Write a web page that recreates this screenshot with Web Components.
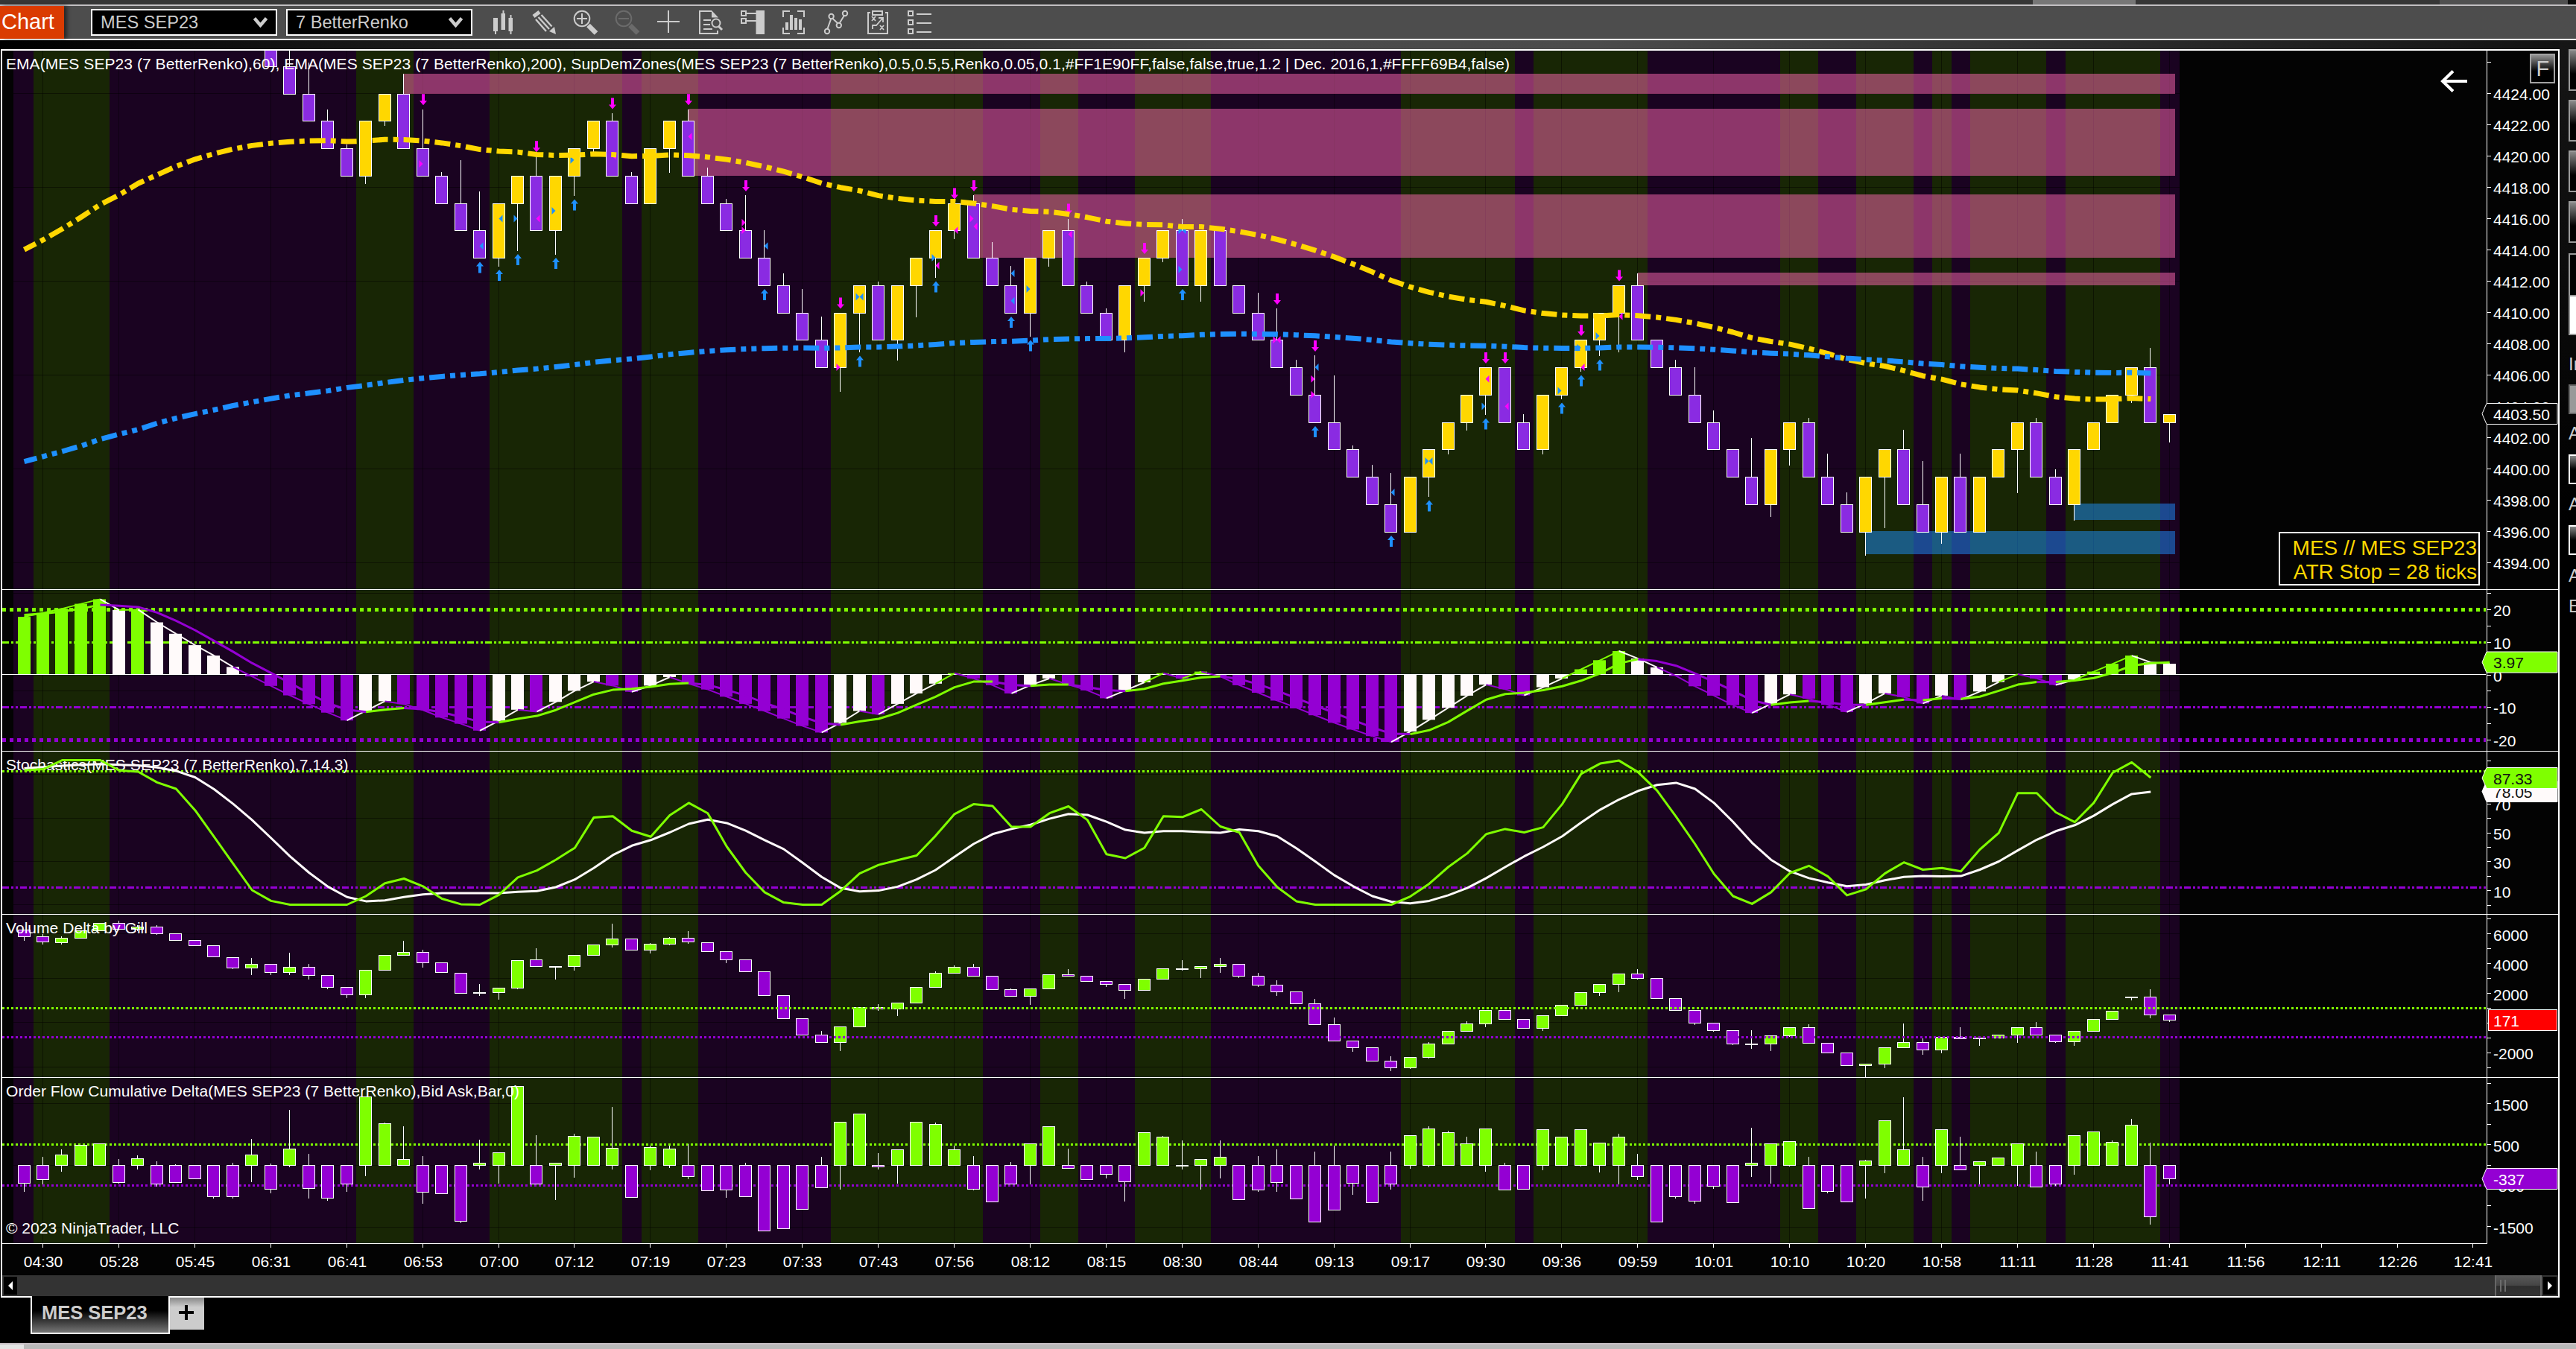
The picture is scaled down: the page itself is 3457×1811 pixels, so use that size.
<!DOCTYPE html>
<html lang="en">
<head>
<meta charset="utf-8">
<title>Chart</title>
<style>
	html, body {
		margin: 0;
		height: 100%;
		overflow: hidden;
		background: #000;
		font-family: "Liberation Sans", Arial, sans-serif;
	}
</style>
</head>
<body>
<chart-window>
	<chart-toolbar slot="toolbar">
		<tool-select>MES SEP23</tool-select>
		<tool-select>7 BetterRenko</tool-select>
	</chart-toolbar>
	<chart-frame>
		<price-panel></price-panel>
		<momentum-panel></momentum-panel>
		<stochastics-panel></stochastics-panel>
		<volume-panel></volume-panel>
		<flow-panel></flow-panel>
		<time-axis></time-axis>
		<scroll-strip></scroll-strip>
	</chart-frame>
	<trade-strip slot="side"></trade-strip>
	<tab-strip slot="tabs">MES SEP23</tab-strip>
</chart-window>

<script>
(function() {
	const LIME = "#7fff00", VIOLET = "#9400d3", SNOW = "#fffafa";
	const GOLD = "#ffd700", BLUE = "#1e90ff", PURPLE = "#8a2be2", PINK = "#ff69b4";

	function define(name, html, Base) {
		const template = document.createElement("template");
		template.innerHTML = html;
		customElements.define(name, class extends (Base || HTMLElement) {
			constructor() {
				super();
				this._root = this.attachShadow({mode: "open"});
				this._root.appendChild(template.content.cloneNode(true));
				if (this.render) this.render();
			}
		});
	}

	/* ---------- window shell ---------- */

	define("chart-window", `
		<style>
		:host { display: flex; flex-direction: column; width: 3457px; height: 1811px; background: #000; }
		.title { flex: none; height: 6px; display: flex; background: #363636; }
		.title i { display: block; height: 6px; }
		.work {
			flex: 1; min-height: 0; display: flex; align-items: flex-start;
			background:
				linear-gradient(90deg, #000 0, #1f1f1f 19%, #333 37%, #494949 50%, #4b4b4b 62%, #262626 86%, #111 100%) 0 0 / 100% 12px no-repeat;
		}
		.main { flex: none; width: 3434px; padding: 12px 0 0 1px; }
		.foot { flex: none; height: 6px; border-top: 2px solid #c6bfc3; background: linear-gradient(90deg, #e4e4e4 32px, #b9b9b9 32px); }
		</style>
		<div class="title">
			<i style="width:2728px"></i><i style="width:138px;background:#777"></i><i style="width:408px"></i>
			<i style="width:172px;background:#505050"></i><i style="width:11px;background:#0a0a0a"></i>
		</div>
		<slot name="toolbar"></slot>
		<div class="work">
			<div class="main"><slot></slot><slot name="tabs"></slot></div>
			<slot name="side"></slot>
		</div>
		<div class="foot"></div>
	`);

	define("tool-select", `
		<style>
		:host {
			display: flex; align-items: center; justify-content: space-between; box-sizing: border-box;
			width: 250px; height: 36px; padding: 0 11px 0 11px; border: 2px solid #fff; background: #000;
			color: #ccc; font-size: 23.6px; line-height: 32px;
		}
		svg { display: block; width: 19px; height: 14px; }
		</style>
		<span><slot></slot></span>
		<svg viewBox="0 0 19 14"><path d="M1.5 1.5L9.5 11L17.5 1.5" fill="none" stroke="#ccc" stroke-width="4.4"/></svg>
	`);

	define("chart-toolbar", `
		<style>
		:host {
			flex: none; display: flex; align-items: center; height: 44px;
			background: #4d4d4d; border-top: 2px solid #c2bfc2; border-bottom: 2px solid #fff;
		}
		.tab {
			width: 84px; height: 44px; padding-left: 2px; margin-right: 36px; background: #da3b01; color: #fff;
			font-size: 29px; line-height: 43px; box-shadow: 4px 0 5px rgba(0,0,0,.5);
		}
		.picks { display: flex; gap: 12px; }
		.icons { display: block; width: 600px; height: 44px; margin-left: 22px; }
		</style>
		<div class="tab">Chart</div>
		<div class="picks"><slot></slot></div>
		<svg class="icons" viewBox="656 8 600 44" fill="none" stroke="#ccc" stroke-width="2">
			<g fill="#ccc" stroke="none">
				<path d="M662 24h6v18h-6zM664 42h2v4h-2zM672.500 18h5.500v22h-5.500zM674.500 14h2v4h-2zM682.500 24h5.500v18h-5.500zM684.500 20h2v26h-2z"/>
				<path d="M714.500 20l8-6 3 4-8 6zM746 46l-9-4 7-6z"/>
			</g>
			<path d="M719 26l14 16M722.500 23l14.500 16M726.500 20l14 15.500" stroke-width="2.400"/>
			<circle cx="781" cy="25" r="10.300"/><path d="M774 25h14M781 18v14"/><path d="M789.500 34l10.500 10.500" stroke-width="6.500"/>
			<g stroke="#6b6b6b"><circle cx="837" cy="25" r="10.300"/><path d="M830 25h14"/><path d="M845.500 34l10.500 10.500" stroke-width="6.500"/></g>
			<path d="M882 29h30M897 14v30"/>
			<path d="M955 15H939V45H963V41"/><path d="M955 14l9 9.500h-9z" fill="#ccc" stroke="none"/>
			<path d="M944 27h10M944 33h9M944 39h12"/><circle cx="961" cy="31" r="5.500"/><path d="M964 35l5 5" stroke-width="3"/>
			<path d="M995 15h6v6h-6zM995 25h6v6h-6zM1002 18h13M1002 28h13"/><path d="M1014.500 14h11.500v32h-11.500z" fill="#ccc" stroke="none"/>
			<path d="M1060 15h-9v8M1070 15h9v8M1060 45h-9v-8M1070 45h9v-8"/>
			<path d="M1054 30h4v10h-4zM1060 20h4v20h-4zM1066 24h4v16h-4zM1072 26h4v14h-4z" fill="#ccc" stroke="none"/>
			<path d="M1110.500 38.500L1115 26M1117.500 25l6.500 6M1127 30.500l5.500-9"/>
			<circle cx="1110" cy="42" r="3.200"/><circle cx="1115.600" cy="22" r="3.200"/><circle cx="1125.800" cy="34" r="3.200"/><circle cx="1134" cy="18" r="3.200"/>
			<path d="M1168 17h-3v28h26V17h-3M1171 15h13v5h-13z"/>
			<path d="M1170 22l5 6M1175 22l-5 6M1181 34l5 6M1186 34l-5 6M1171 39v-5h5l8-9M1179 24h6v6" stroke-width="1.800"/>
			<path d="M1219 15h6v6h-6zM1219 27h6v6h-6zM1219 39h6v6h-6zM1230 19h20M1230 31h20M1230 43h20"/>
		</svg>
	`);

	define("chart-frame", `
		<style>
		:host {
			display: flex; flex-direction: column; box-sizing: border-box; width: 3434px; height: 1676px;
			border: 2px solid #fff; background: #030303;
		}
		</style>
		<slot></slot>
	`);

	define("scroll-strip", `
		<style>
		:host { display: flex; align-items: center; height: 28px; background: #333; }
		.btn { width: 18px; height: 24px; margin: 0 2px; background: #000; display: grid; place-items: center; }
		.thumb {
			box-sizing: border-box; width: 63px; height: 28px; margin-left: auto; padding: 6px 5px;
			display: flex; gap: 4px; border: solid #666; border-width: 0 2px;
			background: linear-gradient(#5a5a5a, #444 50%, #2e2e2e 52%, #333);
		}
		.thumb i { width: 2px; height: 16px; background: #6c6c6c; }
		svg { display: block; width: 6px; height: 12px; fill: #fff; }
		</style>
		<div class="btn"><svg viewBox="0 0 6 12"><path d="M6 0v12L0 6z"/></svg></div>
		<div class="thumb"><i></i><i></i></div>
		<div class="btn"><svg viewBox="0 0 6 12"><path d="M0 0v12l6-6z"/></svg></div>
	`);

	define("tab-strip", `
		<style>
		:host { display: flex; align-items: flex-start; padding-left: 40px; }
		.tab {
			box-sizing: border-box; width: 187px; height: 51px; margin-top: -2px; padding-left: 13px;
			border: 2px solid #fff; border-top: 0; background: linear-gradient(#000 40%, #777);
			color: #ccc; font: bold 25.500px/45px "Liberation Sans", Arial, sans-serif;
		}
		.add { width: 46px; height: 43px; background: linear-gradient(#888, #ccc 30%); }
		svg { display: block; width: 46px; height: 43px; }
		</style>
		<div class="tab"><slot></slot></div>
		<div class="add"><svg viewBox="0 0 46 43"><path d="M12 20h20M22 10v20" stroke="#000" stroke-width="4"/></svg></div>
	`);

	define("trade-strip", `
		<style>
		:host {
			display: flex; flex-direction: column; box-sizing: border-box; width: 22px; height: 1749px; padding: 12px 0 0 12px;
			overflow: hidden; background: linear-gradient(#161616, #000 650px); color: #ccc; font-size: 24px; line-height: 28px;
		}
		div { flex: none; box-sizing: border-box; width: 40px; border: 2px solid #999; background: #000; }
		.up { height: 56px; margin-bottom: 12px; background: linear-gradient(#888, #000 60%); }
		.mini { height: 40px; border-color: #fff; background: linear-gradient(#888, #000 50%); }
		span { flex: none; height: 28px; white-space: nowrap; }
		</style>
		<div class="up"></div><div class="up"></div><div class="up"></div><div class="up"></div>
		<div style="height:56px;margin-top:2px;border-bottom:0"></div>
		<div style="height:54px;background:#fff"></div>
		<span style="margin-top:25px">In</span>
		<div style="height:40px;margin-top:13px;border-color:#666;background:#999"></div>
		<span style="margin-top:12px">A</span>
		<div class="mini" style="margin-top:14px"></div>
		<span style="margin-top:13px">A</span>
		<div class="mini" style="margin-top:14px"></div>
		<span style="margin-top:14px">A</span>
		<span style="margin-top:13px">E</span>
	`);

	/* ---------- plot helpers ---------- */

	const X = i => 32.5 + 25.48 * i;
	const PLOT_LEFT = 3, AXIS = 3337;
	const BULL = [[1, 4], [18, 20], [25, 31], [33, 35], [43, 50], [54, 55], [59, 62], [73, 78], [80, 85],
		[93, 94], [97, 99], [101, 101], [103, 106], [108, 112]];

	const box = (x, y, w, h, fill, more = "") => `<rect x="${x}" y="${y}" width="${w}" height="${h}" fill="${fill}" ${more}/>`;
	const rule = (y, color, w, dash) =>
		`<path d="M${PLOT_LEFT} ${y}H${AXIS - 1}" stroke="${color}" stroke-width="${w}" ${dash ? `stroke-dasharray="${dash}"` : ""}/>`;
	const text = (x, y, s, size = 21, fill = "#fff", more = "") =>
		`<text x="${x}" y="${y}" font-size="${size}" fill="${fill}" ${more}>${s}</text>`;
	const title = (y, s, width) => text(8, y, s, 21, "#fff", `textLength="${width}"`);
	const line = (pts, color, w, more = "") =>
		`<polyline points="${pts.map(p => p[0].toFixed(1) + "," + p[1].toFixed(1)).join(" ")}" fill="none" stroke="${color}" stroke-width="${w}" stroke-linejoin="round" ${more}/>`;

	// body with a one pixel outline and the wick behind it
	function candle(i, top, bottom, high, low, color) {
		const c = Math.round(X(i));
		const t = Math.round(top), h = Math.max(1, Math.round(bottom) - t);
		const hi = Math.round(high), lo = Math.round(low);
		return box(c - 1, hi, 1, Math.max(0, lo - hi + 1), "#fff") +
			box(c - 8.5, t + .5, 16, h, color, 'stroke="#fff"');
	}

	function tag(y, label, fill, color, edge = "#fff") {
		return `<path d="M3331 ${y}L3337 ${y - 14}H3432V${y + 14}H3337Z" fill="${fill}" stroke="${edge}"/>` + text(3346, y + 8, label, 21, color);
	}

	class Panel extends HTMLElement {
		render() {
			const top = this.top, h = this.bottom - top;
			let s = box(PLOT_LEFT, top, 3430, h, "#030303");
			s += box(18, top, 2907, h, "#1a0321");
			for (const [a, b] of BULL) {
				const x = Math.round(X(a - .5));
				s += box(x, top, Math.round(X(b + .5)) - x, h, "#182605");
			}
			for (let i = 1; i < 114; i += 4) s += box(Math.round(X(i)) - 1, top, 1, h, "rgba(0,0,0,.45)");
			for (const y of this.grid) s += box(18, Math.round(y - .5), 2907, 1, "rgba(0,0,0,.45)");
			s += this.plot();
			s += box(AXIS, top, 1, h, "#fff");
			for (const y of this.ticks) s += box(AXIS + 1, Math.round(y - .5), 5, 1, "#fff");
			for (const [y, label] of this.labels) s += text(3346, y + 8.5, label);
			s += this.tags();
			s += box(PLOT_LEFT, this.bottom - 1, this.bottom > 1600 ? 3335 : 3430, 1, "#fff");
			const css = `:host { display: block; flex: none; height: ${h}px; } svg { display: block; }`;
			this._root.innerHTML = `<style>${css}</style>
				<svg width="3430" height="${h}" viewBox="${PLOT_LEFT} ${top} 3430 ${h}" font-family="Liberation Sans, Arial, sans-serif">${s}</svg>`;
		}
	}

	/* ---------- price ---------- */

	// bar 13 onwards; levels are ticks below 4424: side, top, bottom, wick end, signal arrows
	const BRICKS = `P -14 -7,P -7 0 -12,P 0 7 -8,P 7 14 4,P 14 21 13,Y 7 21 23,Y 0 7 8,P 0 14 -5,P 14 21 4 d,P 21 28 20,P 28 35 17,
P 35 42 25 u,Y 28 42 44 u,Y 21 28 40 u,P 21 35 16 d,Y 21 35 41 u,Y 14 21 26 u,Y 7 14 15,P 7 21 5 d,P 21 28 20,Y 14 28,Y 7 14 20,
P 7 21 4 d,P 21 28 19,P 28 35 27,P 35 42 26 d,P 42 49 35 u,P 49 56 46,P 56 63 50,P 63 70 57,Y 56 70 76 d,Y 49 56 66 u,P 49 63 48,
Y 49 63 68,Y 42 49 57,Y 35 42 47 du,Y 28 35 37 d,P 28 42 26 d,P 42 49 38,P 49 56 44 u,Y 42 56 62 u,Y 35 42 44,P 35 49 32 d,
P 49 56 48,P 56 63 55,Y 49 63 66,Y 42 49 53 d,Y 35 42 43,P 35 49 32 u,Y 35 49 53,P 35 49,P 49 56,P 56 63 51,P 63 70 55 d,
P 70 77 68,P 77 84 67 du,P 84 91 72,P 91 98 90,P 98 105 95,P 105 112 97 u,Y 98 112,Y 91 98 103 u,Y 84 91 92,Y 77 84 86,
Y 70 77 82 du,P 70 84 70 d,P 84 91 82,Y 77 91 92,Y 70 77 78 u,Y 63 70 71 du,Y 56 63 67 u,Y 49 56 66 d,P 49 63 46,P 63 70,
P 70 77 68,P 77 84 70,P 84 91 81,P 91 98,P 98 105 88,Y 91 105 108,Y 84 91 95,P 84 98 83,P 98 105 92,P 105 112 102,Y 98 112 118,
Y 91 98 111,P 91 105 86,P 105 112 94,Y 98 112 115,P 98 112 92,Y 98 112,Y 91 98,Y 84 91 102,P 84 98 83,P 98 105 96,Y 91 105 109,
Y 84 91,Y 77 84,Y 70 77 79,P 70 84 65,Y 82 84 89`.split(",").map((row, k) => {
		const [side, top, bottom, wick, arrows] = row.trim().split(" ");
		const b = {i: 13 + k, side, top: +top, bottom: +bottom, arrows: arrows || ""};
		b.high = side === "P" && wick ? +wick : b.top;
		b.low = side === "Y" && wick ? +wick : b.bottom;
		b.close = side === "P" ? b.bottom : b.top;
		return b;
	});

	// fills: bar, tick, pointing direction, m = sell, b = buy
	const FILLS = `21 18 r m,24 39 l b,25 32 l b,26 32 r b,27 32 l m,28 30 r b,29 17 r b,31 16 l m,35 11 l m,38 33 r m,38 35 r m,
39 39 l b,43 70 r m,44 52 r b,44 52 l b,48 42 r b,48 44 l m,49 35 l m,50 32 r m,50 34 l m,52 46 l b,52 53 l b,53 50 r b,55 36 l m,
59 51 r m,61 45 r b,61 35 r b,61 35 l b,66 63 r m,66 63 l m,68 70 l b,68 73 r m,68 77 r m,72 102 l b,74 94 r b,74 94 l b,
77 73 l m,77 80 r b,78 80 l m,81 76 r b,82 65 r b,82 70 l m,83 62 r b,84 57 l m`.split(",").map(s => s.trim().split(" "));

	const tickY = t => 125.6 + 5.25 * t;

	function ema(seed, period) {
		const out = seed.slice();
		for (let i = seed.length; i <= 112; i++) {
			const prev = out[i - 1];
			out.push(prev + (BRICKS[i - 13].close - prev) * 2 / (period + 1));
		}
		return out.map((v, i) => [X(i), tickY(v)]);
	}

	define("price-panel", "", class extends Panel {
		get top() { return 68; }
		get bottom() { return 792; }
		get grid() { return [0, 1, 2, 3, 4, 5].map(k => 125.6 + 126 * k); }
		get ticks() { return Array.from({length: 17}, (_, k) => 83.6 + 42 * k); }
		get labels() { return Array.from({length: 16}, (_, k) => [125.6 + 42 * k, (4424 - 2 * k) + ".00"]); }
		plot() {
			const zone = (bar, y1, y2, color) => box(Math.round(X(bar)), y1, 2919 - Math.round(X(bar)), y2 - y1, color, 'opacity=".5"');
			let s = zone(20, 99, 126, PINK) + zone(35, 146, 236, PINK) + zone(50, 261, 346, PINK) + zone(85, 366, 383, PINK) +
				zone(108, 676, 698, BLUE) + zone(97, 713, 744, BLUE);
			for (const b of BRICKS) {
				s += candle(b.i, tickY(b.top), tickY(b.bottom), tickY(b.high), tickY(b.low), b.side === "P" ? PURPLE : GOLD);
				const c = Math.round(X(b.i));
				if (b.arrows.includes("u")) {
					s += `<path d="M${c} ${tickY(b.low + 1).toFixed(1)}l5 6h-3v9h-4v-9h-3z" fill="${BLUE}"/>`;
				}
				if (b.arrows.includes("d")) {
					s += `<path d="M${c} ${tickY(b.high - 1).toFixed(1)}l5-6h-3v-9h-4v9h-3z" fill="#f0f"/>`;
				}
			}
			for (const [i, t, dir, kind] of FILLS) {
				const c = Math.round(X(+i)) - .5;
				s += `<path d="M${c} ${tickY(+t)}l${dir === "r" ? "-5-5v10z" : "5-5v10z"}" fill="${kind === "m" ? "#f0f" : BLUE}"/>`;
			}
			s += line(ema([39.9, 37.4, 34.6, 31.6, 28.4, 25.9, 23, 20.8, 18.6, 16.8, 15.4, 14.2, 13.3, 12.7, 12.3, 12.1, 12], 60),
				GOLD, 7, 'stroke-dasharray="21 7 7 7" stroke-dashoffset="3.5"');
			s += line(ema([94.1, 92.8, 91.5, 90.1, 88.4, 87.1, 85.9, 84.3, 83, 81.9, 80.9, 79.8, 78.9, 78, 77.2, 76.6, 76, 75.2, 74.6, 73.9, 73.3], 200),
				BLUE, 7, 'stroke-dasharray="21 7 7 7 7 7" stroke-dashoffset="3.5"');
			s += title(93, "EMA(MES SEP23 (7 BetterRenko),60), EMA(MES SEP23 (7 BetterRenko),200), SupDemZones(MES SEP23 (7 BetterRenko),0.5,0.5,5,Renko,0.05,0.1,#FF1E90FF,false,false,true,1.2 | Dec. 2016,1,#FFFF69B4,false)", 2018);
			s += '<path d="M3311 109H3279M3292 95.500L3278 109l14 13.500" fill="none" stroke="#fff" stroke-width="4"/>';
			s += box(3059, 715, 268, 70, "#030303", 'stroke="#fff" stroke-width="2"');
			s += text(3324, 744.5, "MES // MES SEP23", 28, GOLD, 'text-anchor="end"') + text(3324, 776.5, "ATR Stop = 28 ticks", 28, GOLD, 'text-anchor="end"');
			return s;
		}
		tags() {
			return tag(555.5, "4403.50", "#030303", "#fff") +
				'<linearGradient id="f" x2="0" y2="1"><stop stop-color="#999"/><stop offset=".6" stop-color="#000"/></linearGradient>' +
				box(3396, 73, 32, 38, "url(#f)", 'stroke="#a3a3a3" stroke-width="2"') + text(3403.5, 102, "F", 29, "#ccc");
		}
	});

	/* ---------- momentum histogram ---------- */

	const MOMENTUM = `G17.7 G18.9 G20.2 G21.7 G23.1 W19.8 G19.9 W16 W12.5 W9 W5.8 W2.3 P-.6 P-3.5 P-6.4 P-9.1 P-11.7 P-14.1 W-11.1 W-8.2
P-9.1 P-10.9 P-13.2 P-15.1 P-17.2 W-14.2 W-10.8 P-11.4 W-8.4 W-5 W-2.2 P-3.4 P-5.3 W-3.4 W-.8 P-2.8 P-4.6 P-6.8 P-9 P-11.2 P-13.5
P-15.8 P-17.8 W-14.8 W-11.2 P-12.2 W-9 W-5.8 W-2.8 G.4 P-1.2 P-3.3 P-5.8 W-3.3 W-1.2 P-3.1 P-4.9 P-7.3 W-4.9 W-2.4 G.4 P-1.2 G.9
P-.6 P-3.3 P-5.6 P-8 P-10.2 P-12.5 P-14.8 P-16.9 P-18.9 P-20.7 W-17.5 W-13.9 W-10.2 W-6.5 W-3.1 P-4.5 P-6.4 W-3.9 W-1.2 G1.6 G4.4
G7.2 W4.9 W2.2 P-.4 P-3.6 P-6.5 P-9.4 P-11.8 W-9 W-6.1 P-7.4 P-9.3 P-11.5 W-8.9 W-5.8 P-6.9 P-8.9 W-6.5 P-7.7 W-5.2 W-2.3 G.1
P-1.2 P-3.2 W-1.6 G.9 G3.3 G5.8 W3.7 W3.3`.split(/\s+/).map(s => [s[0], +s.slice(1)]);
	const SIGNAL = [18.3, 18.7, 19.3, 20.2, 21.4, 21.1, 20.7, 19, 16.5, 13.6, 10.3, 7, 3.5, .5, -2.6, -5.8, -8.8, -10.8, -11.5, -10.8,
		-10.3, -10.6, -11.6, -13, -14.5, -14.7, -13.6, -12.7, -10.9, -8.5, -6.1, -4.7, -4.4, -3.8, -2.9, -2.6, -3.2, -4.7, -6.5, -8.7,
		-10.7, -13, -14.9, -15.4, -14.4, -13.6, -11.8, -9.3, -6.8, -3.9, -2.2, -2.2, -3.2, -3.5, -3.1, -3.1, -3.9, -4.8, -5.1, -4.4,
		-2.8, -1.9, -.9, -.6, -1.4, -3, -5, -7.3, -9.5, -11.8, -14, -16.2, -18.2, -18.3, -17.1, -14.6, -11.1, -7.7, -6, -5.6, -4.8,
		-3.6, -1.9, .3, 3.4, 4.7, 4.1, 2.7, .3, -2.2, -5, -7.9, -9.3, -8.6, -8.1, -8.6, -9.3, -9.3, -8.5, -7.7, -7.9, -7.3, -7.5,
		-6.8, -5, -3.1, -2.3, -2.3, -1.8, -1.1, .5, 2.7, 3.5, 3.7];
	const FALLING = [[4, 18], [20, 25], [35, 43], [51, 53], [55, 58], [63, 73], [85, 92], [94, 97], [99, 100], [101, 102], [106, 107]];
	const INK = {G: LIME, W: SNOW, P: VIOLET};

	define("momentum-panel", "", class extends Panel {
		get top() { return 792; }
		get bottom() { return 1009; }
		get grid() { return [796, 927]; }
		get ticks() { return Array.from({length: 10}, (_, k) => 796.5 + 21.9 * k); }
		get labels() { return [[818.5, "20"], [862.4, "10"], [906, "0"], [949.8, "-10"], [993.6, "-20"]]; }
		plot() {
			const y = v => 905.5 - 4.375 * v;
			let s = rule(818.5, LIME, 5, "5 5") + rule(862.5, LIME, 3, "9 3 3 3 3 3") + rule(949.5, VIOLET, 3, "9 3 3 3 3 3") + rule(993.5, VIOLET, 5, "5 5");
			MOMENTUM.forEach(([k, v], i) => {
				s += box(Math.round(X(i)) - 9, Math.min(905.5, y(v)).toFixed(1), 17, Math.abs(4.375 * v).toFixed(1), INK[k]);
			});
			s += rule(905.5, "#fff", 1);
			MOMENTUM.forEach(([k, v], i) => {
				if (i) s += line([[X(i - 1), y(MOMENTUM[i - 1][1])], [X(i), y(v)]], INK[k], 2);
			});
			const pts = SIGNAL.map((v, i) => [X(i), y(v)]);
			s += line(pts.slice(0, 5), LIME, 3);
			FALLING.forEach(([a, b], n) => {
				s += line(pts.slice(a, b + 1), VIOLET, 3);
				const next = FALLING[n + 1] ? FALLING[n + 1][0] : 113;
				s += line(pts.slice(b, next + 1), LIME, 3);
			});
			return s;
		}
		tags() { return tag(889, "3.97", LIME, "#111"); }
	});

	/* ---------- stochastics ---------- */

	// the three lower studies keep their levels on one shared row grid
	const row = r => 780 + r * .574;

	const FAST = [443, 440, 419, 419, 419, 443, 446, 471, 486, 536, 598, 661, 723, 748, 757, 757, 757, 757, 737, 707, 696, 714, 743,
		756, 757, 734, 693, 677, 652, 624, 553, 550, 584, 598, 548, 519, 543, 621, 682, 728, 752, 757, 757, 725, 684, 664, 653, 642,
		596, 545, 522, 526, 575, 575, 543, 527, 559, 639, 648, 624, 550, 552, 534, 574, 588, 666, 716, 749, 757, 757, 757, 757, 757,
		738, 708, 669, 637, 592, 580, 588, 576, 522, 451, 427, 420, 447, 490, 551, 615, 685, 737, 755, 728, 683, 666, 691, 735, 721,
		684, 658, 675, 671, 679, 628, 589, 496, 496, 541, 564, 519, 448, 424, 460];
	const SLOW = [438, 435, 432, 430, 428, 430, 431, 436, 444, 459, 487, 521, 559, 601, 644, 682, 715, 739, 749, 747, 739, 733, 730,
		730, 730, 730, 727, 725, 716, 698, 671, 641, 619, 606, 588, 568, 558, 566, 584, 606, 627, 659, 692, 718, 726, 724, 715, 698,
		676, 645, 615, 592, 580, 570, 556, 545, 547, 563, 582, 589, 585, 585, 587, 589, 581, 585, 597, 625, 656, 688, 714, 737, 750,
		754, 748, 735, 718, 695, 669, 644, 622, 597, 565, 535, 511, 491, 477, 472, 486, 519, 563, 612, 652, 679, 695, 705, 714, 710,
		700, 692, 690, 691, 690, 675, 656, 630, 605, 585, 571, 549, 522, 498, 493];

	define("stochastics-panel", "", class extends Panel {
		get top() { return 1009; }
		get bottom() { return 1228; }
		get grid() { return [1039, 1098.5, 1156.5, 1214.5]; }
		get ticks() { return Array.from({length: 11}, (_, k) => 1021 + 19.4 * k); }
		get labels() { return [[1079, "70"], [1118, "50"], [1157, "30"], [1196, "10"]]; }
		plot() {
			return rule(1035.5, LIME, 3, "3 3") + rule(1191.5, VIOLET, 3, "9 3 3 3 3 3") +
				title(1034, "Stochastics(MES SEP23 (7 BetterRenko),7,14,3)", 459.5) +
				line(SLOW.map((r, i) => [X(i), row(r)]), SNOW, 3) +
				line(FAST.map((r, i) => [X(i), row(r)]), LIME, 3);
		}
		tags() { return tag(1062.5, "78.05", SNOW, "#111") + tag(1044.5, "87.33", LIME, "#111"); }
	});

	/* ---------- volume delta ---------- */

	// side, open/close rows, then high and low rows where the wick shows
	const DELTA = `P 816 832 816 840,P 832 844 826 850,G 835 845 832 850,G 818 835,G 800 818,P 800 814 796 816,G 810 814 806 818,
P 810 825 806 827,P 825 841,P 841 852,P 853 879,P 880 905 880 907,G 897 905 883 920,P 897 916 897 920,G 904 916 871 920,
P 904 922 896 932,P 923 950 923 953,P 950 968 950 974,G 911 968 911 975,G 875 910,G 868 875 843 875,P 868 892 863 903,P 893 916,
P 917 965,G 963 965 944 969,G 952 962 952 979,G 887 952 887 954,P 886 902 860 902,G 901 902 901 932,G 875 902 875 911,G 851 875,
G 837 851 802 856,P 837 863,G 850 863 847 870,G 835 849 833 851,P 835 844 819 847,P 845 866,P 867 886 867 893,P 886 914,
P 914 969,P 969 1023,P 1023 1062,P 1062 1079 1054 1079,G 1043 1079 1043 1099,G 998 1043,P 998 1001 990 1004,G 987 1001 987 1016,
G 951 987,G 917 950 914 950,G 903 917 899 917,P 903 924 896 924,P 924 955,P 956 971 953 971,G 954 971 954 990,G 921 954,
P 920 924 908 924,P 924 936,P 937 943 937 948,P 943 957 943 976,G 931 957,G 907 931,P 906 907 887 911,G 901 907 901 927,
G 897 901 882 915,P 896 924 896 927,P 924 945 918 948,P 945 961 934 969,P 961 989,P 989 1037 979 1037,P 1037 1076 1021 1076,
P 1076 1091 1076 1101,P 1091 1123,P 1123 1138 1113 1145,G 1114 1138 1114 1141,G 1083 1114 1079 1116,G 1053 1083,
G 1036 1053 1030 1053,G 1004 1036 1004 1042,P 1004 1025,P 1025 1046,G 1017 1046 1017 1051,G 992 1017,G 963 992,G 944 962 944 969,
G 919 943 919 960,P 919 930 909 932,P 930 976,P 977 1004,P 1004 1034 1004 1037,P 1034 1051 1034 1054,P 1051 1083 1051 1085,
P 1082 1083 1052 1094,G 1063 1083 1063 1098,G 1045 1063 1045 1066,P 1045 1081 1038 1081,P 1081 1104,P 1104 1133,
G 1130 1133 1130 1160,G 1091 1130 1091 1138,G 1079 1091 1035 1091,P 1079 1097 1071 1108,G 1067 1097 1067 1104,
P 1067 1070 1044 1070,G 1069 1070 1069 1087,G 1062 1069,G 1045 1062 1045 1080,P 1045 1062 1033 1062,P 1062 1077 1062 1080,
G 1053 1077 1053 1087,G 1025 1053,G 1006 1025,G 973 975 973 980,P 973 1015 955 1022,P 1015 1027 1015 1031`;

	define("volume-panel", "", class extends Panel {
		get top() { return 1228; }
		get bottom() { return 1447; }
		get grid() { return [1253.5, 1313.5, 1372.5, 1432.5]; }
		get ticks() { return Array.from({length: 11}, (_, k) => 1233.5 + 19.95 * k); }
		get labels() { return [[1254, "6000"], [1294, "4000"], [1334, "2000"], [1413, "-2000"]]; }
		plot() {
			let s = "";
			DELTA.split(",").forEach((d, i) => {
				const [side, a, b, hi, lo] = d.trim().split(" ");
				s += candle(i, row(+a) - .5, row(+b) - .5, row(+(hi || a)) - .5, row(+(lo || b)) - .5, INK[side]);
			});
			return s + rule(1353.5, LIME, 3, "3 3") + rule(1392.5, VIOLET, 3, "3 3") + title(1253, "Volume Delta by Gill", 190);
		}
		tags() { return box(3339.5, 1355.5, 92, 28, "#f00", 'stroke="#fff"') + text(3346, 1378, "171"); }
	});

	/* ---------- order flow ---------- */

	// side and close row measured from the zero row, then high and low; 0 = no wick on that side
	const FLOW = `P 1408 0 1428,P 1400 1347 1411,G 1342 1331 1381,G 1320,G 1316,P 1407 1352 1409,G 1351 1344 1376,P 1411 1358 1415,
P 1407 1365,P 1398,P 1440 0 1444,P 1440 1362 1444,G 1342 1305 1405,P 1423 1364 1431,G 1329 1238 1371,P 1420 1341 1444,
P 1443 0 1448,P 1411 0 1427,G 1207 0 1391,G 1269 1267,G 1352 1277,P 1430 1345 1456,P 1433,P 1497 0 1500,G 1362 1307 1375,
G 1337 0 1408,G 1182,P 1410 1297,G 1362 0 1446,G 1298 1294 1394,G 1301,G 1326 1230 1376,P 1441,G 1325 1321 1378,G 1329 1322 1372,
P 1393 1318 1398,P 1426,P 1424 0 1441,P 1440 1361,P 1520,P 1515,P 1469,P 1419 1348,G 1266 0 1422,G 1246,P 1370 1338 1376,
G 1330 0 1408,G 1266,G 1271 1267,G 1330 1322,P 1422 1345 1425,P 1452,P 1410 1359,G 1316 0 1411,G 1276,P 1374 1329,P 1400,
P 1388 0 1396,P 1405 0 1451,G 1290,G 1301 1298,P 1368 1310 1376,G 1353 0 1422,G 1347 1310 1397,P 1447,P 1424 1345 1427,
P 1407 1331 1427,P 1445,P 1499 1336,P 1471 1321,P 1408 0 1434,P 1454,P 1410 1336 1423,G 1297 0 1373,G 1281 1277 1371,
G 1290 1287,G 1316 1300,G 1281 0 1380,P 1424 1361,P 1422,G 1283 0 1378,G 1300,G 1283 0 1369,G 1315 0 1383,G 1300 1294 1411,
P 1393 1340 1400,P 1499,P 1440 0 1443,P 1450 0 1455,P 1415 0 1421,P 1454,G 1362 1279 1392,G 1316 0 1409,G 1311 0 1369,
P 1468 1348,P 1428 0 1432,P 1452,G 1356 1354 1443,G 1262 0 1385,G 1330 1209,P 1417 1347 1448,G 1283 0 1385,P 1377 1300,
G 1358 0 1411,G 1349,G 1316 0 1414,P 1417 1335,P 1410 0 1413,G 1297 0 1387,G 1289,G 1313 1309,G 1273 1258,P 1487 1315 1505,
P 1398 0 1411`;

	define("flow-panel", "", class extends Panel {
		get top() { return 1447; }
		get bottom() { return 1670; }
		get grid() { return [1481.5, 1564.5, 1647]; }
		get ticks() { return Array.from({length: 8}, (_, k) => 1454.5 + 27.4 * k); }
		get labels() { return [[1482, "1500"], [1537, "500"], [1591.5, "-500"], [1647, "-1500"]]; }
		plot() {
			let s = rule(1536.5, LIME, 3, "3 3") + rule(1591.5, VIOLET, 3, "3 3");
			FLOW.split(",").forEach((d, i) => {
				const [side, close, hi, lo] = d.trim().split(" ").map((v, k) => k ? +v : v);
				const a = Math.min(close, 1367), b = Math.max(close, 1367);
				s += candle(i, row(a) - .5, row(b) - .5, row(hi || a) - .5, row(lo || b) - .5, INK[side]);
			});
			return s + title(1472, "Order Flow Cumulative Delta(MES SEP23 (7 BetterRenko),Bid Ask,Bar,0)", 689) +
				title(1656, "© 2023 NinjaTrader, LLC", 232.5);
		}
		tags() { return tag(1582.5, "-337", VIOLET, "#fff"); }
	});

	/* ---------- time axis ---------- */

	const TIMES = `04:30 05:28 05:45 06:31 06:41 06:53 07:00 07:12 07:19 07:23 07:33 07:43 07:56 08:12 08:15 08:30 08:44 09:13 09:17
09:30 09:36 09:59 10:01 10:10 10:20 10:58 11:11 11:28 11:41 11:56 12:11 12:26 12:41`.split(/\s+/);

	define("time-axis", `
		<style>:host { display: block; flex: none; height: 42px; } svg { display: block; }</style>
		<svg width="3430" height="42" viewBox="3 1670 3430 42" font-family="Liberation Sans, Arial, sans-serif" text-anchor="middle"></svg>
	`, class extends HTMLElement {
		render() {
			this._root.querySelector("svg").innerHTML = TIMES.map((t, k) => {
				const x = Math.round(X(1 + 4 * k));
				return box(x - 1, 1670, 1, 5, "#fff") + text(x, 1701, t);
			}).join("");
		}
	});
})();
</script>
</body>
</html>
